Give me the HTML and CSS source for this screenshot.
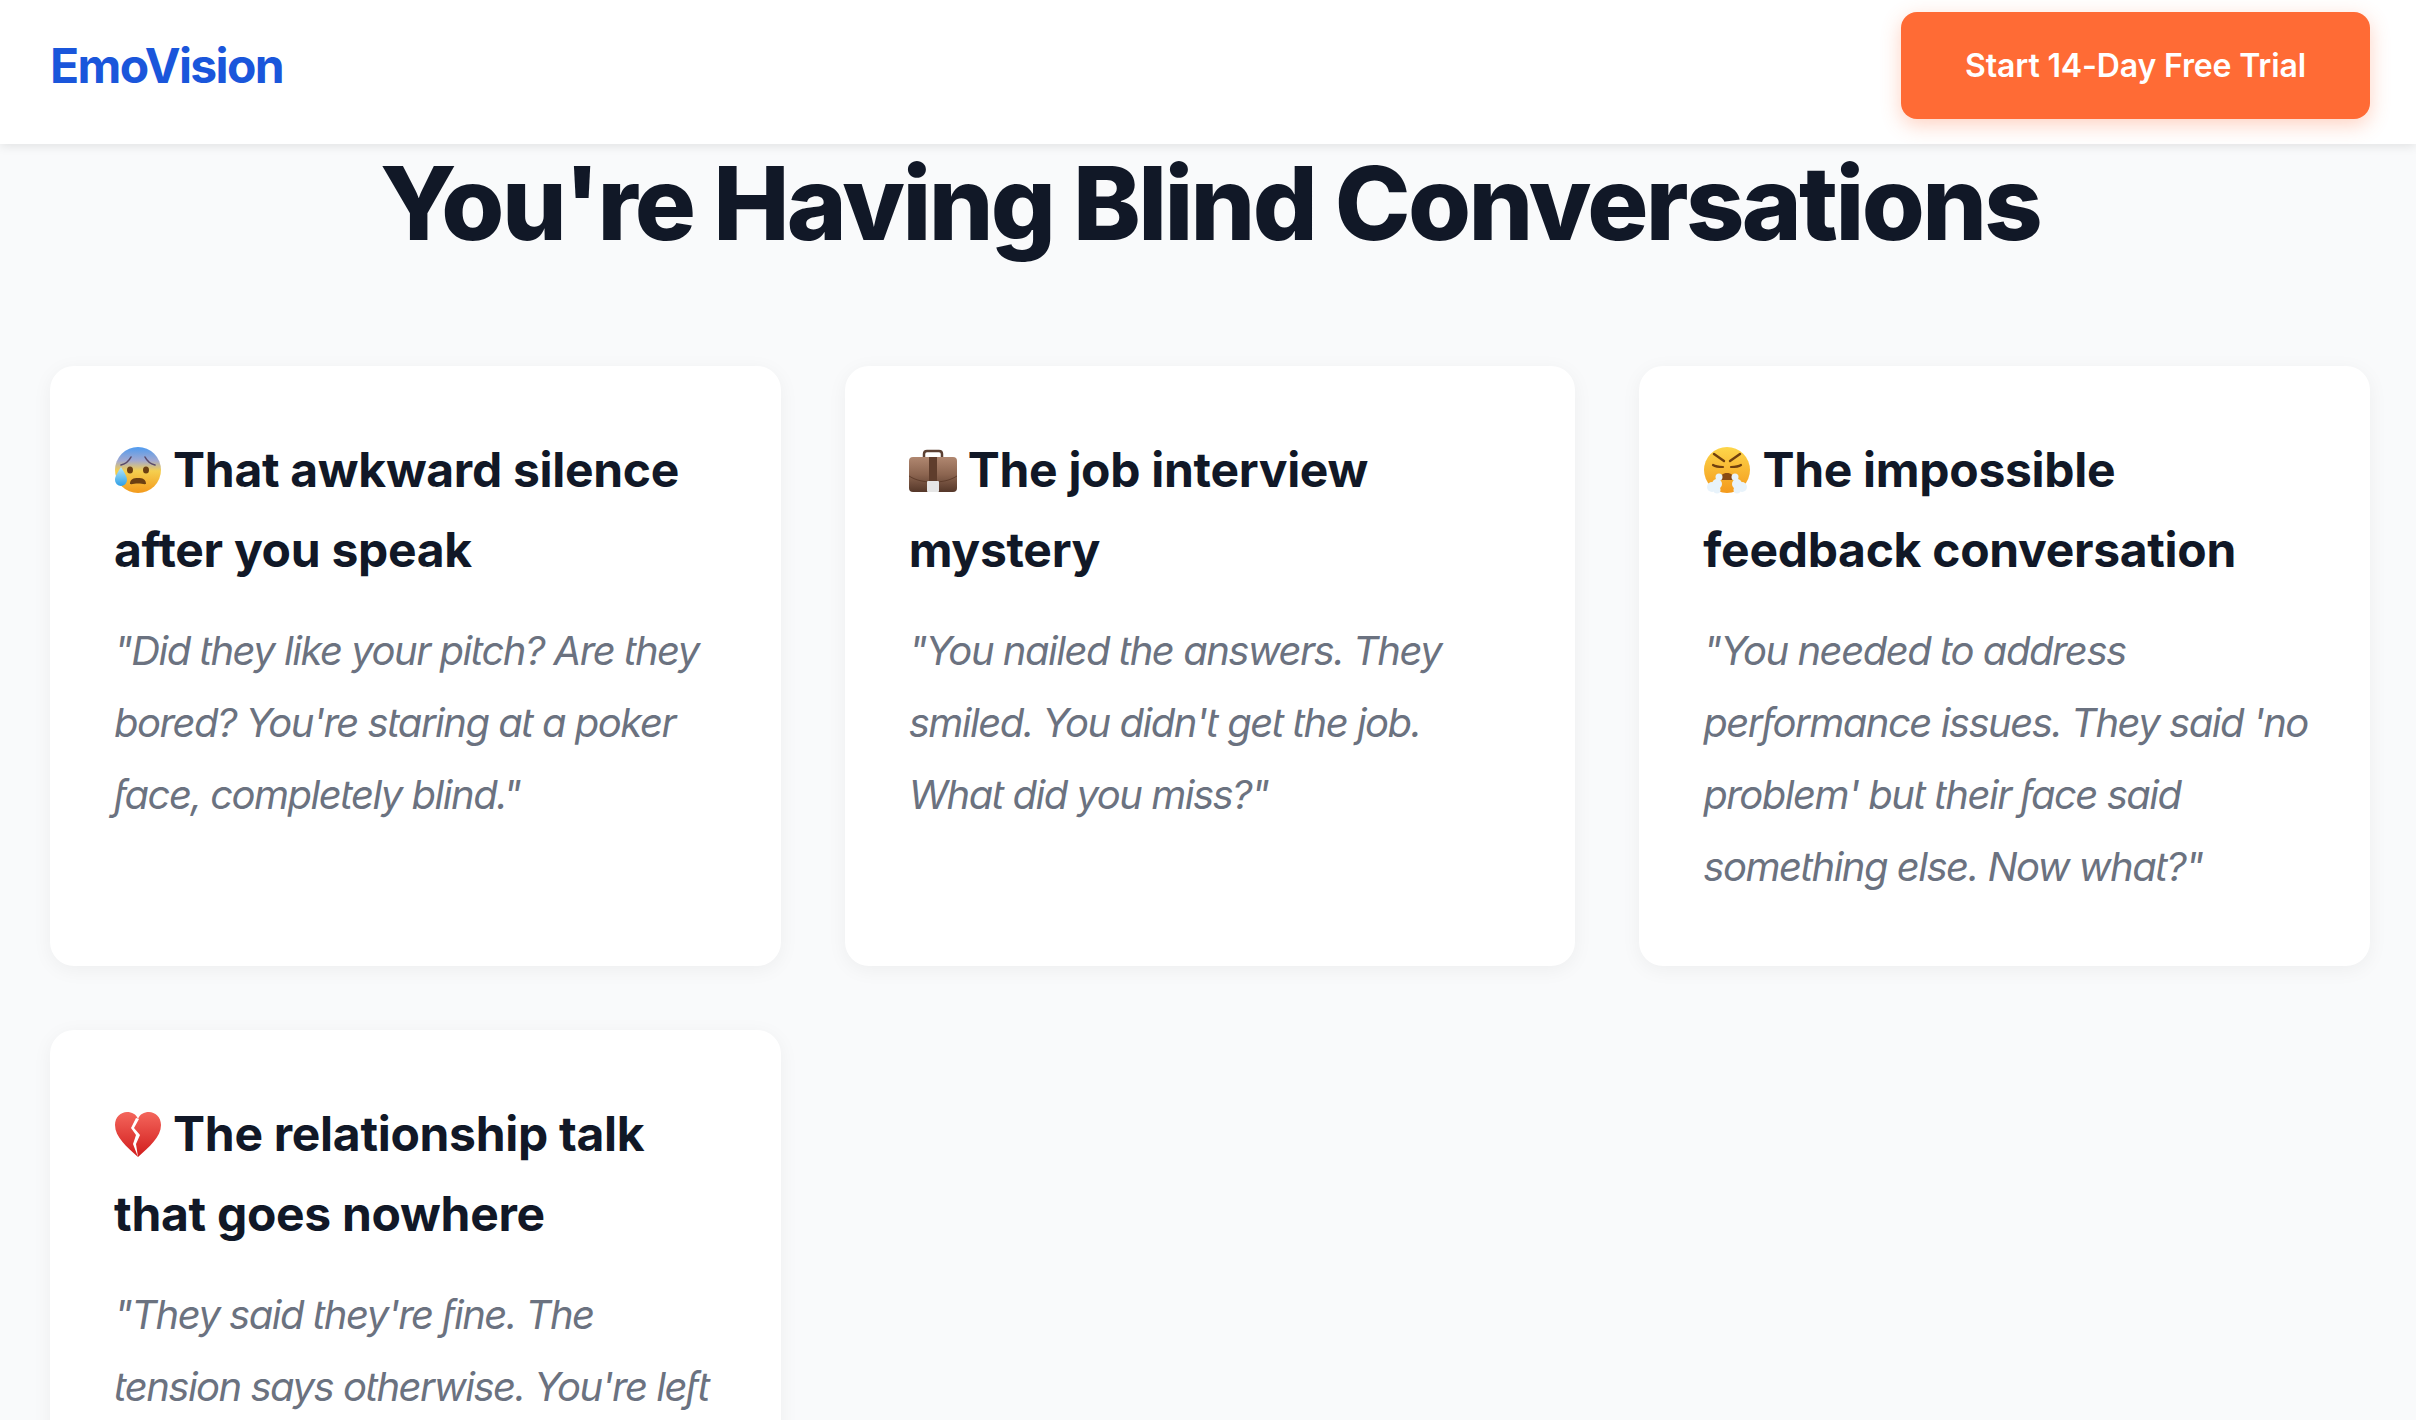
FILE: index.html
```html
<!DOCTYPE html>
<html lang="en">
<head>
<meta charset="utf-8">
<title>EmoVision</title>
<link rel="stylesheet" href="styles.css">
</head>
<body>
<svg class="defs" width="0" height="0" aria-hidden="true">
  <defs>
    <linearGradient id="coldFace" x1="0" y1="0" x2="0" y2="1">
      <stop offset="0" stop-color="#4f9bf0"/>
      <stop offset=".3" stop-color="#a3a9cf"/>
      <stop offset=".52" stop-color="#f5cf4f"/>
      <stop offset="1" stop-color="#f39a1c"/>
    </linearGradient>
    <linearGradient id="yellowFace" x1="0" y1="0" x2="0" y2="1">
      <stop offset="0" stop-color="#fdd64a"/>
      <stop offset="1" stop-color="#f49a1c"/>
    </linearGradient>
    <linearGradient id="tear" x1="0" y1="0" x2="0" y2="1">
      <stop offset="0" stop-color="#b5e8fb"/>
      <stop offset="1" stop-color="#2e9fe6"/>
    </linearGradient>
    <linearGradient id="leather" x1="0" y1="0" x2="0" y2="1">
      <stop offset="0" stop-color="#b08770"/>
      <stop offset=".5" stop-color="#8c6550"/>
      <stop offset="1" stop-color="#553729"/>
    </linearGradient>
    <linearGradient id="heart" x1="0" y1="0" x2="0" y2="1">
      <stop offset="0" stop-color="#f4665c"/>
      <stop offset="1" stop-color="#d11c1c"/>
    </linearGradient>
  </defs>
</svg>
<header class="nav">
  <div class="logo">EmoVision</div>
  <a class="cta">Start 14-Day Free Trial</a>
</header>
<main class="content">
  <h1 class="title">You're Having Blind Conversations</h1>
  <section class="grid">
    <article class="card">
      <h3 class="card-title"><svg class="emoji" viewBox="0 0 48 48"><circle cx="24" cy="24" r="23" fill="url(#coldFace)"/><path d="M7 19c4-1 8-4 10-8M41 19c-4-1-8-4-10-8" fill="none" stroke="#5a4a6a" stroke-width="1.6" stroke-linecap="round"/><ellipse cx="16" cy="24" rx="3" ry="3.600" fill="#6b3f12"/><ellipse cx="32" cy="24" rx="3" ry="3.600" fill="#6b3f12"/><path d="M16 38c0-5 3.500-6 8-6s8 1 8 6c-2 .5-5-.6-8-.6s-6 1.100-8 .6z" fill="#6b3f12"/><path d="M7 21c3 5 6 9 6 13a6 6 0 0 1-12 0c0-4 3-8 6-13z" fill="url(#tear)"/></svg> That awkward silence after you speak</h3>
      <p class="quote">"Did they like your pitch? Are they bored? You're staring at a poker face, completely blind."</p>
    </article>
    <article class="card">
      <h3 class="card-title"><svg class="emoji" viewBox="0 0 48 48"><path d="M15 13V8c0-2 1-3 3-3h12c2 0 3 1 3 3v5" fill="none" stroke="#5b4033" stroke-width="2.500"/><rect x="0" y="11" width="48" height="35" rx="4" fill="url(#leather)"/><rect x="20" y="11" width="8" height="26" fill="#5f3d2c"/><path d="M0 30c8 5 16 6 24 6s16-1 24-6" fill="none" stroke="#5f3d2c" stroke-width="1"/><rect x="18" y="35" width="12" height="11" rx="1" fill="#e6e6e6"/></svg> The job interview mystery</h3>
      <p class="quote">"You nailed the answers. They smiled. You didn't get the job. What did you miss?"</p>
    </article>
    <article class="card">
      <h3 class="card-title"><svg class="emoji" viewBox="0 0 48 48"><circle cx="24" cy="24" r="23" fill="url(#yellowFace)"/><path d="M11 8l10 7M37 8l-10 7" stroke="#70400f" stroke-width="2.400" stroke-linecap="round"/><path d="M10 19c3 2 7 2 10 2M38 19c-3 2-7 2-10 2" fill="none" stroke="#70400f" stroke-width="2.200" stroke-linecap="round"/><path d="M17 34c0-5 3-7 7-7s7 2 7 7z" fill="#8a4a12"/><g fill="#e8f3fb"><circle cx="9" cy="41" r="5"/><circle cx="14" cy="38" r="5"/><circle cx="16" cy="31" r="3.500"/><circle cx="14" cy="44" r="3.500"/><circle cx="39" cy="41" r="5"/><circle cx="34" cy="38" r="5"/><circle cx="32" cy="31" r="3.500"/><circle cx="34" cy="44" r="3.500"/></g></svg> The impossible feedback conversation</h3>
      <p class="quote">"You needed to address performance issues. They said 'no problem' but their face said something else. Now what?"</p>
    </article>
    <article class="card">
      <h3 class="card-title"><svg class="emoji" viewBox="0 0 48 48"><path d="M24 47C13 37 1 27 1 15 1 7 7 2 13 2c5 0 9 2 11 7 2-5 6-7 11-7 6 0 12 5 12 13 0 12-12 22-23 32z" fill="url(#heart)"/><path d="M22 8l-5 10 5 7-3 9 5 13-2-13 4-9-6-7 5-9z" fill="#fff"/></svg> The relationship talk that goes nowhere</h3>
      <p class="quote">"They said they're fine. The tension says otherwise. You're left</p>
    </article>
  </section>
</main>
</body>
</html>
```
FILE: styles.css
```css
* { box-sizing: border-box; }
html, body { margin: 0; height: 100%; overflow: hidden; }
body {
  background: #f9fafb;
  color: #111827;
  font-family: Inter, "Liberation Sans", sans-serif;
}
.defs { display: block; height: 0; }
.nav {
  display: flex;
  align-items: center;
  justify-content: space-between;
  height: 144px;
  padding: 12px 46px 25px 50px;
  background: #fff;
  box-shadow: 0 2px 10px rgba(0, 0, 0, .1);
  position: relative;
  z-index: 1;
}
.logo {
  font-size: 48px;
  font-weight: 700;
  color: #1a56db;
  letter-spacing: -1.6px;
}
.cta {
  display: flex;
  align-items: center;
  justify-content: center;
  width: 469px;
  height: 107px;
  border-radius: 16px;
  background: #ff6b35;
  color: #fff;
  font-size: 32px;
  font-weight: 600;
  letter-spacing: -.15px;
  box-shadow: 0 6px 20px rgba(255, 107, 53, .3);
}
.content { padding: 0 46px 0 50px; }
.title {
  margin: -2px 0 102px;
  text-align: center;
  font-size: 102px;
  font-weight: 770;
  line-height: 122px;
  letter-spacing: -2.65px;
}
.grid {
  display: grid;
  grid-template-columns: repeat(3, 1fr);
  gap: 64px;
}
.card {
  min-height: 600px;
  padding: 64px 64px 62px;
  background: #fff;
  border-radius: 24px;
  box-shadow: 0 4px 20px rgba(0, 0, 0, .05);
}
.card-title {
  margin: 0 0 25px;
  font-size: 48px;
  font-weight: 740;
  line-height: 80px;
  letter-spacing: -.3px;
}
.emoji {
  width: 48px;
  height: 48px;
  vertical-align: -7px;
}
.quote {
  margin: 0 -12px 0 0;
  color: #6b7280;
  font-size: 40px;
  font-style: italic;
  font-feature-settings: "cv12", "cv13";
  line-height: 72px;
  letter-spacing: -1.5px;
}
```
